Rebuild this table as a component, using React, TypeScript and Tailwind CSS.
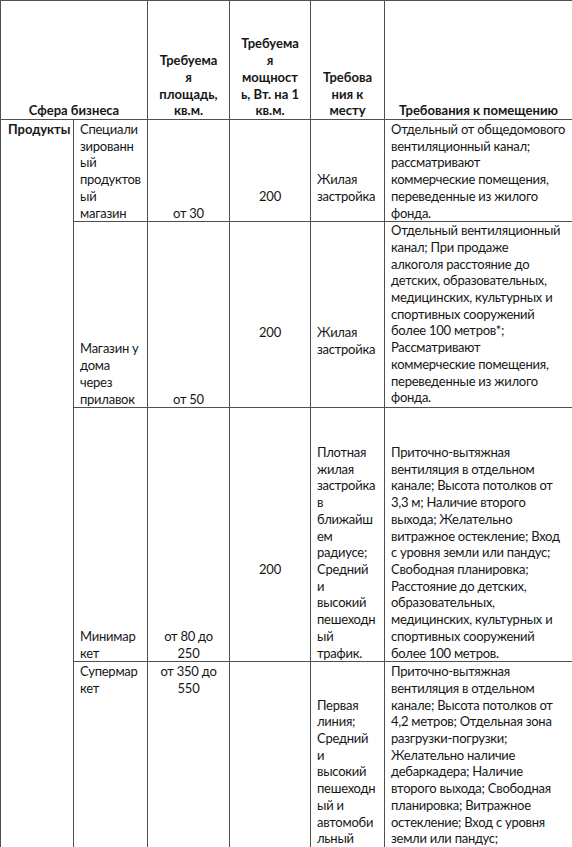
const lines = (items: string[]) =>
  items.map((t, i) => (
    <span key={i} className="block whitespace-nowrap">
      {t}
    </span>
  ));

const cell = "border border-[#4f4f4f] px-[6px] py-0";
const body = `${cell} tracking-[-0.25px]`;

export default function App() {
  return (
    <div className="bg-white w-[572px] text-[#161616] font-['Lato','Carlito','Liberation_Sans',sans-serif] text-[13px] leading-[16.7px]">
      <table className="border-collapse table-fixed w-[572px]">
        <colgroup>
          <col className="w-[73px]" />
          <col className="w-[74px]" />
          <col className="w-[82px]" />
          <col className="w-[81px]" />
          <col className="w-[74px]" />
          <col className="w-[188px]" />
        </colgroup>
        <thead>
          <tr className="h-[119px]">
            <th colSpan={2} className={`${cell} align-bottom text-center font-bold`}>
              Сфера бизнеса
            </th>
            <th className={`${cell} align-bottom text-center font-bold`}>
              {lines(["Требуема", "я", "площадь,", "кв.м."])}
            </th>
            <th className={`${cell} align-bottom text-center font-bold`}>
              {lines(["Требуема", "я", "мощност", "ь, Вт. на 1", "кв.м."])}
            </th>
            <th className={`${cell} align-bottom text-center font-bold`}>
              {lines(["Требова", "ния к", "месту"])}
            </th>
            <th className={`${cell} align-bottom text-center font-bold`}>
              Требования к помещению
            </th>
          </tr>
        </thead>
        <tbody>
          {/* specialised store */}
          <tr className="h-[102px]">
            <td rowSpan={4} className={`${cell} align-top font-bold pl-[7px] pt-[1px]`}>
              Продукты
            </td>
            <td className={`${body} align-top pt-[1px]`}>
              {lines(["Специали", "зированн", "ый", "продуктов", "ый", "магазин"])}
            </td>
            <td className={`${body} align-bottom text-center`}>от 30</td>
            <td className={`${body} align-bottom text-center pb-[17px]`}>200</td>
            <td className={`${body} align-bottom pb-[17px]`}>
              {lines(["Жилая", "застройка"])}
            </td>
            <td className={`${body} align-top pt-[1px]`}>
              {lines([
                "Отдельный от общедомового",
                "вентиляционный канал;",
                "рассматривают",
                "коммерческие помещения,",
                "переведенные из жилого",
                "фонда.",
              ])}
            </td>
          </tr>

          {/* corner shop */}
          <tr className="h-[186px]">
            <td className={`${body} align-bottom`}>
              {lines(["Магазин у", "дома", "через", "прилавок"])}
            </td>
            <td className={`${body} align-bottom text-center`}>от 50</td>
            <td className={`${body} align-bottom text-center pb-[67px]`}>200</td>
            <td className={`${body} align-bottom pb-[50px]`}>
              {lines(["Жилая", "застройка"])}
            </td>
            <td className={`${body} align-top`}>
              {lines([
                "Отдельный вентиляционный",
                "канал; При продаже",
                "алкоголя расстояние до",
                "детских, образовательных,",
                "медицинских, культурных и",
                "спортивных сооружений",
                "более 100 метров*;",
                "Рассматривают",
                "коммерческие помещения,",
                "переведенные из жилого",
                "фонда.",
              ])}
            </td>
          </tr>

          {/* minimarket */}
          <tr className="h-[254px]">
            <td className={`${body} align-bottom`}>{lines(["Минимар", "кет"])}</td>
            <td className={`${body} align-bottom text-center`}>
              {lines(["от 80 до", "250"])}
            </td>
            <td className={`${body} align-bottom text-center pb-[84px]`}>200</td>
            <td className={`${body} align-bottom`}>
              {lines([
                "Плотная",
                "жилая",
                "застройка",
                "в",
                "ближайш",
                "ем",
                "радиусе;",
                "Средний",
                "и",
                "высокий",
                "пешеходн",
                "ый",
                "трафик.",
              ])}
            </td>
            <td className={`${body} align-bottom`}>
              {lines([
                "Приточно-вытяжная",
                "вентиляция в отдельном",
                "канале; Высота потолков от",
                "3,3 м; Наличие второго",
                "выхода; Желательно",
                "витражное остекление; Вход",
                "с уровня земли или пандус;",
                "Свободная планировка;",
                "Расстояние до детских,",
                "образовательных,",
                "медицинских, культурных и",
                "спортивных сооружений",
                "более 100 метров.",
              ])}
            </td>
          </tr>

          {/* supermarket */}
          <tr className="h-[185px]">
            <td className={`${body} align-top pt-[1px]`}>{lines(["Супермар", "кет"])}</td>
            <td className={`${body} align-top text-center pt-[1px]`}>
              {lines(["от 350 до", "550"])}
            </td>
            <td className={body}></td>
            <td className={`${body} align-bottom`}>
              {lines([
                "Первая",
                "линия;",
                "Средний",
                "и",
                "высокий",
                "пешеходн",
                "ый и",
                "автомоби",
                "льный",
              ])}
            </td>
            <td className={`${body} align-top pt-[1px]`}>
              {lines([
                "Приточно-вытяжная",
                "вентиляция в отдельном",
                "канале; Высота потолков от",
                "4,2 метров; Отдельная зона",
                "разгрузки-погрузки;",
                "Желательно наличие",
                "дебаркадера; Наличие",
                "второго выхода; Свободная",
                "планировка; Витражное",
                "остекление; Вход с уровня",
                "земли или пандус;",
              ])}
            </td>
          </tr>
        </tbody>
      </table>
    </div>
  );
}
